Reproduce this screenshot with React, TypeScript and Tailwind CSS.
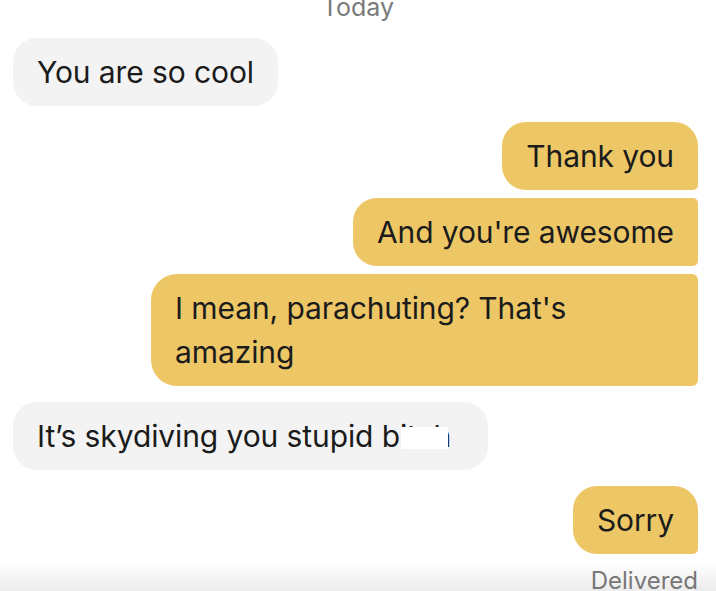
const font = { fontFamily: "Inter, 'Noto Sans', sans-serif" };

function Bubble({ mine, corner, children }: { mine: boolean; corner: string; children: React.ReactNode }) {
  return (
    <div className={mine ? "flex justify-end" : "flex justify-start"}>
      <div
        className={
          "max-w-[547px] px-6 py-3 text-[30px] leading-[44px] tracking-[-0.1px] text-[#1b1b1b] " +
          (mine ? "bg-[#edc766] " : "bg-[#f3f3f3] ") +
          corner
        }
      >
        {children}
      </div>
    </div>
  );
}

export default function App() {
  return (
    <div
      className="w-[716px] h-[591px] overflow-hidden bg-[linear-gradient(to_bottom,#ffffff_0px,#ffffff_562px,#ececec_591px)]"
      style={font}
    >
      <div className="text-center text-[25px] leading-[24px] text-[#7a7a7a] -mt-[5px]">Today</div>

      <div className="flex flex-col pl-[13px] pr-[18px] mt-[19px]">
        <Bubble mine={false} corner="rounded-[24px] w-[265px]">
          You are so cool
        </Bubble>

        <div className="mt-[16px] flex flex-col gap-[8px]">
          <Bubble mine corner="rounded-[24px] rounded-br-[5px]">Thank you</Bubble>
          <Bubble mine corner="rounded-l-[24px] rounded-r-[5px]">And you're awesome</Bubble>
          <Bubble mine corner="rounded-l-[26px] rounded-r-[6px] w-[547px]">
            I mean, parachuting? That's amazing
          </Bubble>
        </div>

        <div className="mt-[16px]">
          <Bubble mine={false} corner="rounded-[24px] w-[475px]">
            It’s skydiving you stupid b
            <span className="relative">
              itch
              <span className="absolute left-[1px] right-[3px] top-[9px] h-[22px] bg-white" />
            </span>
          </Bubble>
        </div>

        <div className="mt-[16px]">
          <Bubble mine corner="rounded-[24px] rounded-br-[5px]">Sorry</Bubble>
        </div>

        <div className="mt-[17px] text-right text-[24px] leading-[20px] text-[#777777]">Delivered</div>
      </div>
    </div>
  );
}
